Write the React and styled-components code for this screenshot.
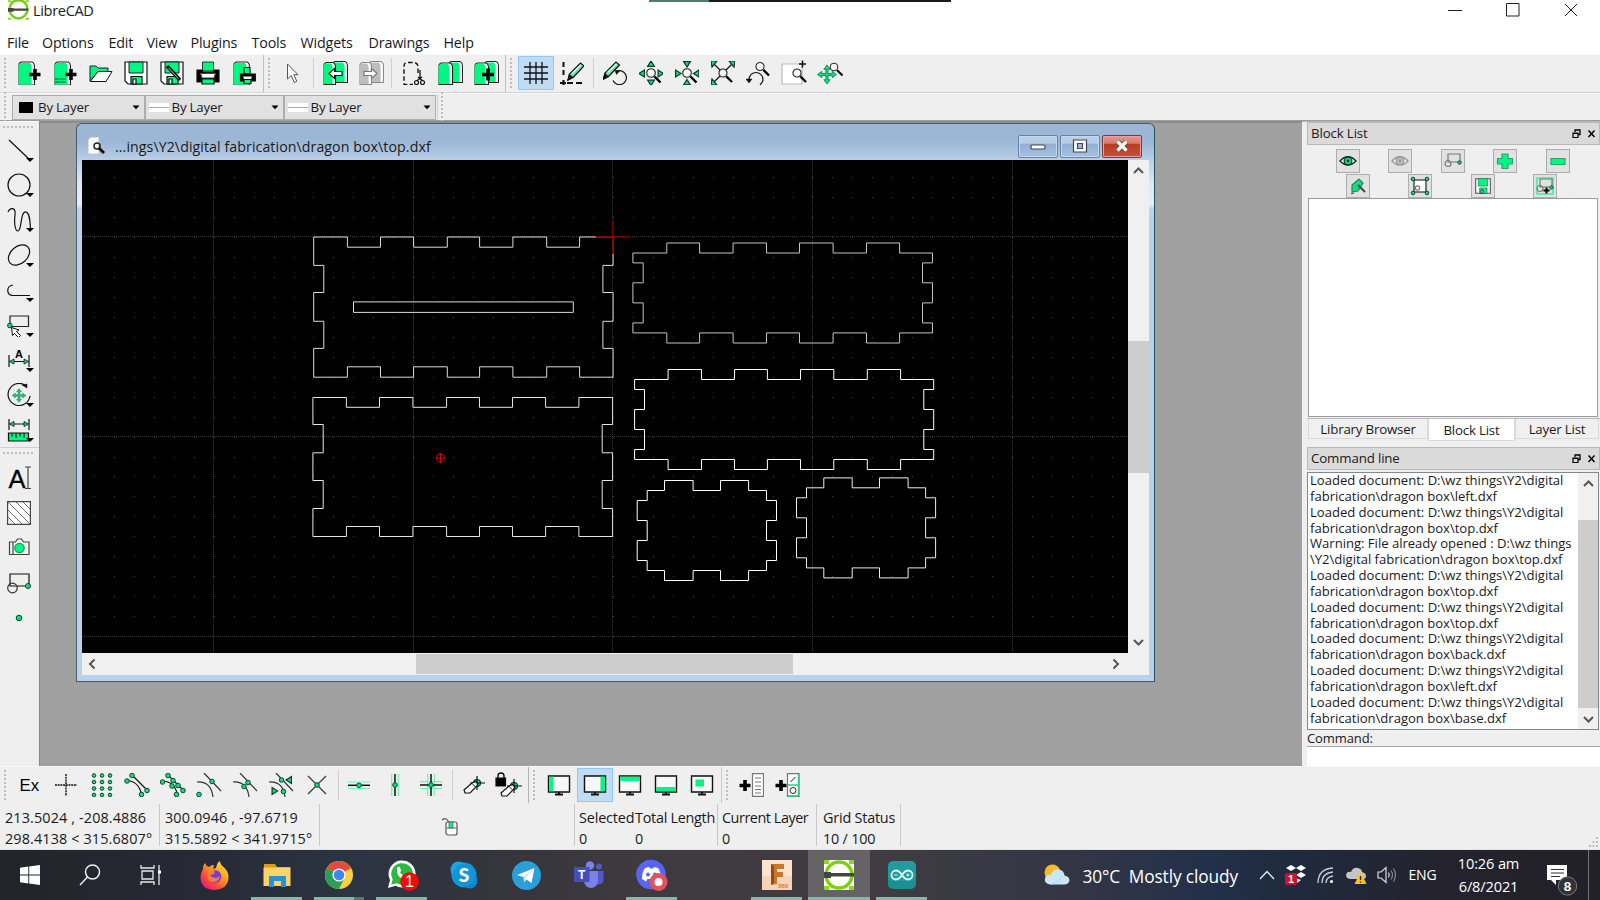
import React from "react";
import styled, { createGlobalStyle, css } from "styled-components";

const G = "#00f781";
const N = "#12dc80";
const FONT = `"Open Sans", "Noto Sans", "Liberation Sans", sans-serif`;

const Global = createGlobalStyle`
  * { box-sizing: border-box; }
  html, body { margin: 0; padding: 0; width: 1600px; height: 900px; overflow: hidden; }
  body { font-family: ${FONT}; color: #1a1a1a; background: #efefef; }
  svg { display: block; flex: none; }
`;

const Screen = styled.div`
  width: 1600px; height: 900px; display: flex; flex-direction: column; overflow: hidden;
`;
const TitleBar = styled.header`
  height: 27px; background: #fff; display: flex; align-items: flex-start; padding-left: 8px; position: relative;
`;
const AppName = styled.span`
  font-size: 14.6px; line-height: 21px; margin-left: 4px; letter-spacing: -0.35px; flex: 1; color: #222;
`;
const TopStrip = styled.div`
  position: absolute; left: 649px; top: 0; width: 302px; height: 2px;
  background: linear-gradient(90deg, #55796f 60px, #1a1a1a 60px);
`;
const CaptionButtons = styled.div`
  display: flex; height: 20px; width: 174px; justify-content: space-around; align-items: center;
`;
const MenuBar = styled.nav`
  height: 27px; background: #fff; display: flex; align-items: center; padding-left: 7px;
`;
const MenuItem = styled.span`
  width: ${(p) => p.$w}px; font-size: 14.3px; line-height: 30px; letter-spacing: -0.17px; white-space: nowrap; padding-top: 4px;
`;
const ToolRow = styled.div`
  height: ${(p) => p.$h}px; display: flex; align-items: center; background: #efefef; padding-bottom: ${(p) => p.$pb || 0}px;
  border-top: 1px solid #f8f8f8; border-bottom: 1px solid ${(p) => p.$line || "#d6d6d6"};
`;
const Grip = styled.i`
  width: 2px; height: 31px; margin: 0 ${(p) => p.$r ?? 6}px 0 4px; flex: none;
  background: repeating-linear-gradient(180deg, #bdbdbd 0 2px, transparent 2px 4px);
`;
const HGrip = styled.i`
  height: 2px; width: 32px; margin: 4px 0 ${(p) => p.$b}px 3px; flex: none;
  background: repeating-linear-gradient(90deg, #bdbdbd 0 2px, transparent 2px 4px);
`;
const ToolButton = styled.span`
  width: 35.85px; height: 34px; flex: none; display: flex; align-items: center; justify-content: center;
  ${(p) => p.$on && css`background: #c0dcf3; border: 1px solid #90c8f6;`}
`;
const Sep = styled.i`
  width: 1px; height: ${(p) => p.$h || 30}px; background: ${(p) => p.$c || "#d0d0d0"}; flex: none; margin: 0 ${(p) => p.$m ?? 3}px 0 ${(p) => p.$l ?? 3}px;
`;
const Combo = styled.span`
  width: ${(p) => p.$w}px; height: 25px; border: 1px solid #adadad; background: #e1e1e1; display: flex; align-items: center;
  font-size: 13.3px; letter-spacing: -0.2px; padding: 0 4px 0 ${(p) => p.$pl}px; gap: ${(p) => p.$gap}px;
  & > span { flex: 1; white-space: nowrap; }
`;
const Swatch = styled.i`
  width: 14px; height: 11px; background: #000;
`;
const LineSwatch = styled.i`
  width: 20px; height: 9px; background: linear-gradient(180deg, #fff 4px, #a8a8a8 4px, #a8a8a8 5px, #fff 5px);
`;
const Middle = styled.main`
  height: 645px; display: flex;
`;
const SideBar = styled.aside`
  width: 39px; background: #efefef; display: flex; flex-direction: column; border-top: 1px solid #f8f8f8;
`;
const SideButton = styled.span`
  height: 35px; width: 38px; display: flex; align-items: center; justify-content: center; position: relative; flex: none;
`;
const DropMark = styled.i`
  position: absolute; left: 26px; top: 26px; border: 4px solid transparent; border-top-color: #000; border-bottom: 0;
`;
const SideLine = styled.i`
  height: 1px; background: #cfcfcf; flex: none;
`;
const Mdi = styled.section`
  width: 1263px; background: #a0a0a0; border-top: 2px solid #8d8d8d; border-left: 1px solid #8a8a8a; padding: 0 0 0 36px;
`;
const SubWindow = styled.div`
  width: 1079px; height: 559px; border: 1px solid #4c5b6b; border-right-color: #1f5660; border-radius: 6px 6px 0 0;
  background: linear-gradient(180deg, #9cb7d6 0, #9cb7d6 18px, #bad0ea 37px, #dce8f5 60px, #e6eff8 80px, #b9d1ea 86px);
  display: flex; flex-direction: column; padding: 0 5px;
`;
const SubTitle = styled.div`
  height: 36px; display: flex; align-items: center; padding: 8px 7px 0 6px; font-size: 14.2px; white-space: pre;
  & > span { flex: 1; margin-left: 10px; letter-spacing: 0.07px; }
`;
const SubButton = styled.i`
  width: 40px; height: 23px; margin-left: 2px; border: 1px solid ${(p) => (p.$red ? "#7a3b38" : "#6582a5")}; border-radius: 2px;
  box-shadow: inset 0 0 0 1px ${(p) => (p.$red ? "#e9a199" : "#c4d8ee")};
  background: ${(p) => p.$red ? "linear-gradient(180deg,#e39a90 0,#d6796c 35%,#bb3a24 38%,#c4523c 100%)" : "linear-gradient(180deg,#b9d0ea 0,#b4cbe6 35%,#8fafd2 38%,#a8c2e0 100%)"};
  display: flex; align-items: center; justify-content: center;
`;
const CanvasRow = styled.div`
  display: flex; height: 493px;
`;
const VScroll = styled.div`
  width: ${(p) => p.$w}px; background: #f0f0f0; display: flex; flex-direction: column; align-items: center;
`;
const HScroll = styled.div`
  height: 22px; background: #f0f0f0; display: flex; align-items: center;
`;
const VThumb = styled.i`
  width: 100%; height: ${(p) => p.$s}px; margin: ${(p) => p.$a}px 0 ${(p) => p.$b}px; background: #cdcdcd; flex: none;
`;
const HThumb = styled.i`
  height: 20px; width: 377px; margin: 0 312px 0 313px; background: #cdcdcd; flex: none;
`;
const Dock = styled.aside`
  width: 298px; padding: 0 0 0 5px; background: #efefef; border-top: 1px solid #b8b8b8; display: flex; flex-direction: column;
`;
const DockTitle = styled.div`
  height: 23px; margin-top: ${(p) => p.$mt || 0}px; border: 1px solid #b9b9b9; background: #dadada; font-size: 13.3px; letter-spacing: -0.15px; line-height: 21px;
  display: flex; align-items: center; padding: 0 1px 0 3px; flex: none;
  & > span { flex: 1; }
`;
const BlockButtons = styled.div`
  display: flex; height: 24px; gap: ${(p) => p.$gap}px; padding-left: ${(p) => p.$pl}px; margin-top: ${(p) => p.$mt}px; flex: none;
`;
const BlockButton = styled.span`
  width: 24px; height: 24px; border: 1px solid #adadad; background: #e1e1e1; display: flex; align-items: center; justify-content: center; flex: none;
`;
const BlockView = styled.div`
  height: 219px; margin: 0 2px 0 1px; border: 1px solid #999ca3; background: #fff; flex: none;
`;
const Tabs = styled.div`
  display: flex; height: 25px; margin-top: 1px; padding-left: 1px; border-top: 1px solid #b9b9b9; flex: none;
`;
const Tab = styled.span`
  width: ${(p) => p.$w}px; height: ${(p) => (p.$on ? 22 : 20)}px; background: ${(p) => (p.$on ? "#fff" : "#f0f0f0")};
  border: 1px solid #d9d9d9; border-top: 0; text-align: center; font-size: 13.3px; line-height: ${(p) => (p.$on ? 22 : 21)}px;
  letter-spacing: -0.2px; white-space: nowrap; flex: none;
`;
const LogBox = styled.div`
  height: 258px; margin-top: 2px; border: 1px solid #828790; background: #fff; display: flex; flex: none; margin-right: 1px;
`;
const LogText = styled.pre`
  margin: 0; flex: 1; font-family: ${FONT}; font-size: 13.1px; line-height: 15.84px; padding: 0 0 0 2px; letter-spacing: -0.02px; overflow: hidden;
`;
const CommandLabel = styled.div`
  height: 16px; font-size: 13px; line-height: 16px; letter-spacing: -0.1px; flex: none;
`;
const CommandInput = styled.div`
  height: 20px; background: #fff; border-top: 1px solid #a8a8a8; flex: none;
`;
const Status = styled.footer`
  height: 46px; background: #efefef; display: flex; position: relative; border-bottom: 1px solid #e4e4e4;
`;
const Cell = styled.div`
  width: ${(p) => p.$w}px; padding-left: ${(p) => p.$pl || 5}px; font-size: 14.4px; line-height: 21px; padding-top: 3px; white-space: pre;
  border-right: ${(p) => (p.$line ? "1px solid #c8c8c8" : "0")}; letter-spacing: ${(p) => p.$ls || 0}px; flex: none; height: 42px;
`;
const MouseCell = styled.div`
  width: 255px; height: 42px; border-right: 1px solid #c8c8c8; display: flex; align-items: center; padding: 4px 0 0 121px;
`;
const Resize = styled.i`
  position: absolute; right: 1px; bottom: 2px;
`;
const Taskbar = styled.div`
  height: 50px; display: flex; color: #fff;
  background: linear-gradient(90deg, #23232a 0, #262a35 200px, #2c3443 360px, #34343c 480px, #3e3a3f 640px, #403c41 880px, #363844 1000px, #353644 1060px, #22304a 1210px, #1f2b3e 1280px, #24222c 1450px, #222028 1600px);
`;
const TaskItem = styled.span`
  width: ${(p) => p.$w || 62.5}px; height: 50px; display: flex; align-items: center; justify-content: center; position: relative; flex: none;
  padding-left: ${(p) => p.$nudge || 0}px;
  background: ${(p) => (p.$active ? "rgba(255,255,255,.2)" : "none")};
  &::after { content: ""; position: absolute; bottom: 0; height: 3px; left: ${(p) => (p.$active ? 0 : 6)}px; right: ${(p) => (p.$active ? 0 : 6)}px;
    background: ${(p) => (p.$two ? "linear-gradient(90deg,#83b8aa 40px,#56786f 40px)" : p.$open ? "#83b8aa" : "none")}; }
`;
const Weather = styled.div`
  display: flex; align-items: center; margin-left: 111px; width: 215px; font-size: 17.3px; letter-spacing: -0.12px; white-space: pre; padding-top: 3px; flex: none;
  & > span { margin-left: 13px; }
  & > svg { margin-bottom: 3px; }
`;
const Tray = styled.div`
  display: flex; align-items: center; flex: none; width: 150px; gap: 10px; padding-bottom: 1px;
`;
const Lang = styled.div`
  width: 46px; font-size: 14px; line-height: 50px; letter-spacing: -0.2px; flex: none;
`;
const Clock = styled.div`
  width: 70px; text-align: center; font-size: 14.6px; line-height: 23px; padding-top: 2px; margin-left: -1px; letter-spacing: -0.15px; flex: none; white-space: nowrap;
`;
const Notice = styled.div`
  margin-left: 22px; padding-top: 14px; flex: none;
`;
const PeekLine = styled.i`
  width: 1px; background: #74747a; margin-left: 10px;
`;

const Svg = ({ w = 24, h, vb, children }) => (
  <svg width={w} height={h || w} viewBox={vb || `0 0 ${w} ${h || w}`} fill="none" stroke="#111" strokeWidth="1.2">{children}</svg>
);
const Dot = ({ x, y, r = 2.3 }) => <circle cx={x} cy={y} r={r} fill={N} stroke="#0b4a2d" strokeWidth="1" />;
const Plus = ({ x, y, r = 5.5 }) => <path d={`M${x - r} ${y}h${2 * r}M${x} ${y - r}v${2 * r}`} stroke="#000" strokeWidth="3.6" />;
const Page = ({ x = 1, y = 1, w = 16, h = 23, c = G, s = "#222" }) => (
  <g stroke={s} strokeWidth="1.1">
    <path d={`M${x + 3} ${y}h${w - 5}q2.500 1 2.500 5v${h - 5}h-${w - 0.5}V${y + 3}q0-3 3-3z`} fill="#fff" />
    <path d={`M${x + 0.6} ${y + h - 0.6}V${y + 4}q0-3 3-3h${w - 8}q2 1 2 4v${h - 5.6}z`} fill={c} stroke="none" />
  </g>
);
const Pencil = ({ t }) => (
  <g transform={t}><path d="M0 17l1.500-6L12.500 0l3.500 3L6 13.500z" fill="#6fe0ae" stroke="#111" /><path d="M0 17l1.300-5 3.600 2.600z" fill="#111" /><path d="M4 10.500L13 1.800" stroke="#d9fff0" /></g>
);
const Lens = ({ x, y, s = 1 }) => (
  <g transform={`translate(${x} ${y}) scale(${s})`}><circle r="4.3" fill="#f6f6f6" stroke="#222" strokeWidth="1.1" /><path d="M3.5 3.5l6 6" stroke="#000" strokeWidth="2.4" /></g>
);
const MoveCross = ({ x, y, s = 1 }) => (
  <path transform={`translate(${x} ${y}) scale(${s})`} d="M0-9l3 4H1v4h4v-2l4 3-4 3V1H1v4h2L0 9l-3-4h2V1h-4v2l-4-3 4-3v2h4v-4h-2z" fill={N} stroke="#0a7a48" strokeWidth=".8" />
);
const Arrow = ({ x, y, a = 0 }) => <path transform={`translate(${x} ${y}) rotate(${a})`} d="M0-3l3.4 5.4h-6.8z" fill={N} stroke="#0b3a24" />;
const Floppy = () => (
  <><path d="M1 1h22v22H4l-3-3z" fill="#fff" /><path d="M5 1h14v11H5z" fill={G} strokeWidth=".9" /><path d="M7 15.500h11V23H7z" fill={G} /><path d="M9 18h3v5H9z" fill="#fff" /></>
);

const I = {
  newDoc: <Svg><Page /><Plus x={18} y={13.5} /></Svg>,
  newTpl: <Svg><Page /><path d="M2 18h11M2 21h11" stroke="#0a5c35" /><Plus x={18} y={13.5} /></Svg>,
  open: <Svg><path d="M1 5v15l8-9.500h10V7H9L7 5z" fill={G} stroke="#123" strokeWidth="1" /><path d="M1.300 20.500L9 10.500h14L17 20.500z" fill="#fff" strokeWidth="1" /></Svg>,
  save: <Svg><Floppy /></Svg>,
  saveAs: <Svg><Floppy /><path d="M7 5l13 14" stroke="#111" strokeWidth="3.600" /><path d="M8.500 7l10 10.500" stroke="#bbb" strokeWidth="1" /></Svg>,
  print: <Svg><path d="M6.500 1h11v9h-11z" fill={G} strokeWidth=".8" /><path d="M1 9h5l1 2h10l1-2h5v12h-5v-3H6v3H1z" fill="#000" /><path d="M6 17h12l1.500-4.500h-15z" fill="#fff" stroke="#444" /><path d="M6 18h12v5H6z" fill={G} /></Svg>,
  preview: <Svg><Page /><path d="M12 6.500h6v6h-6z" fill={G} /><path d="M8.500 13h15v7h-15z" fill="#000" /><path d="M11 15.500h9l-1 2.500h-7z" fill="#fff" stroke="none" /><path d="M12 18.500h7v4h-7z" fill={G} /></Svg>,
  pointer: <Svg><path d="M7.500 3v15l3.700-3.500 3.200 7 2.400-1.200-3-6.600H18z" fill="#fff" stroke="#555" strokeWidth="1" /></Svg>,
  undo: <Svg w={26} h={24}><Page x={10} y={0.5} w={15} h={21} /><Page x={1} y={1.500} w={12} h={22} /><path d="M7 12.500l5.500-5v3h7.500v4h-7.500v3z" fill="#fff" strokeWidth="1.100" /></Svg>,
  redo: <Svg w={26} h={24}><Page x={10} y={0.5} w={15} h={21} c="#bdbdbd" s="#888" /><Page x={1} y={1.500} w={12} h={22} c="#bdbdbd" s="#888" /><path d="M19 12.500l-5.500-5v3H6v4h7.500v3z" fill="#fff" stroke="#777" /></Svg>,
  cut: <Svg><path d="M16 12V6q0-4-4-4.500H5Q2 1.500 2 5v18.500h9" strokeDasharray="4.500 2.500" strokeWidth="1.400" /><path d="M18 9v9M14.500 20l5.500-4M21 20l-5-4" strokeWidth="1.300" /><circle cx="14.500" cy="21.500" r="2" /><circle cx="20.500" cy="21.500" r="2" /></Svg>,
  copy: <Svg w={26} h={24}><Page x={11} y={0.5} w={14} h={21} /><Page x={1} y={2} w={14} h={21.500} /></Svg>,
  paste: <Svg w={26} h={24}><Page x={11} y={0.5} w={14} h={21} /><Page x={1} y={2} w={14} h={21.500} /><Plus x={15} y={13.500} r={6} /></Svg>,
  grid: <Svg><path d="M6 1v22M12 1v22M18 1v22M0 6h24M0 12h24M0 18h24" stroke="#111" strokeWidth="1.300" /></Svg>,
  draft: <Svg><path d="M3.500 1v14" strokeDasharray="5 3" strokeWidth="2" /><path d="M7 22h17" strokeDasharray="6 3" strokeWidth="2" /><path d="M0 22h6M3.500 19v5" strokeWidth="2.200" /><Pencil t="translate(8 2)" /></Svg>,
  redraw: <Svg><path d="M13 10.500A7 7 0 1 1 10 19.500" strokeWidth="1.200" /><path d="M12 9.500h5l-3.500 4z" fill="#111" strokeWidth=".5" /><Pencil t="translate(0.5 1)" /></Svg>,
  zoomIn: <Svg><Arrow x={12} y={3} /><Arrow x={12} y={21.500} a={180} /><Arrow x={3} y={12.500} a={-90} /><Arrow x={21.500} y={12.500} a={90} /><Lens x={12} y={12} /></Svg>,
  zoomOut: <Svg><Arrow x={12} y={3} a={180} /><Arrow x={12} y={21.500} /><Arrow x={3} y={12.500} a={90} /><Arrow x={21.500} y={12.500} a={-90} /><Lens x={12} y={12} /></Svg>,
  zoomAuto: <Svg><path d="M3 3l9 9M21 3L3 21" /><path d="M0 0h6L1 6zM24 0h-6l5 6zM0 24h6l-5-6z" fill={N} stroke="#0b3a24" /><Lens x={12} y={12} s={0.950} /></Svg>,
  zoomPrev: <Svg><path d="M3 19c0-10 14-10 14 0 0 2-1 3-3 5" /><path d="M0 18h6l-3 4z" fill="#111" strokeWidth=".5" /><Lens x={14} y={5.500} s={0.950} /></Svg>,
  zoomWin: <Svg w={26} h={26}><path d="M1 4h20v20H1z" fill="#fff" stroke="#bbb" /><path d="M18 4h7M21.500 0.500v7" strokeWidth="1.500" /><Lens x={16} y={13} s={0.950} /></Svg>,
  zoomPan: <Svg w={26} h={24}><MoveCross x={10} y={13.500} s={1.050} /><Lens x={17} y={6} s={0.900} /></Svg>,
};

const S = {
  line: <Svg><path d="M2 2l20 19" /></Svg>,
  circle: <Svg><circle cx="12" cy="12" r="11" /></Svg>,
  curve: <Svg><path d="M1 4C3-1 9-1 8 7s0 16 3 16c4 0 2-20 8-19 4 1 4 10 4.500 17" /></Svg>,
  ellipse: <Svg><ellipse cx="12" cy="12" rx="12" ry="8.500" transform="rotate(-42 12 12)" /></Svg>,
  poly: <Svg><path d="M6 7C-1 8-1 17 6 17.500h17" /></Svg>,
  select: <Svg><path d="M3 3h18.500v10.500H3z" stroke="#222" /><Dot x={2.800} y={12.500} r={2.300} /><path d="M4.500 14.500l1 8 2-2 4 4 2-2-4-4 2.500-1.500z" fill="#fff" strokeWidth="1" /></Svg>,
  dim: <Svg><path d="M2 7v12M22 7v12M3 13.500h18" /><path d="M2.500 13.500l4.500-2.500v5zM21.500 13.500L17 11v5z" fill={N} strokeWidth=".8" /><text x="12" y="10" textAnchor="middle" fontSize="11" fontWeight="700" fontFamily="Liberation Sans" fill="#000" stroke="none">A</text></Svg>,
  modify: <Svg><path d="M18.500 2.500A11 11 0 1 0 23 13" /><path d="M15 2l5-1v4z" fill="#111" strokeWidth=".5" /><MoveCross x={12} y={12.500} s={0.750} /></Svg>,
  measure: <Svg w={24} h={26}><path d="M2 2v11M22 2v11M3 7h18" /><path d="M2.500 7L7 4.500v5zM21.500 7L17 4.500v5z" fill={N} strokeWidth=".8" /><path d="M1.500 16h20v8h-20z" fill={G} /><path d="M5 16v3.500M9 16v5M13 16v3.500M17 16v5" /></Svg>,
  text: <Svg w={28} h={28}><text x="3.500" y="24" fontSize="25" fontFamily="Liberation Sans" fill="#000" stroke="#000" strokeWidth=".3" textLength="17" lengthAdjust="spacingAndGlyphs">A</text><path d="M20 3h6M23 3v21.500M20 24.500h6" stroke="#444" /></Svg>,
  hatch: <Svg><path d="M.6.6h22.800v22.800H.6z" fill="#fff" stroke="#444" /><path d="M1 16l7 7M1 9l14 14M1 1l22 22M9 1l14 14M16 1l7 7" strokeWidth=".7" stroke="#333" /></Svg>,
  camera: <Svg><path d="M2.500 6h6l2-3h4l2 3h5.500v12.500H2.500zM6 6v12.500" stroke="#444" fill="#f4f4f4" /><circle cx="12.500" cy="12" r="4.700" fill={G} stroke="#189a5c" /></Svg>,
  block: <Svg><path d="M3 3h19v12H3z" stroke="#111" /><circle cx="5.500" cy="17" r="4.800" stroke="#333" /><Dot x={21} y={15} r={2.500} /></Svg>,
  point: <Svg><Dot x={12} y={12} r={2.800} /></Svg>,
};

const Monitor = ({ x, y, w, h }) => (
  <Svg><path d="M1.500 3h21v16h-21z" fill="#f7f7f7" strokeWidth="1.400" /><path d={`M${x} ${y}h${w}v${h}h-${w}z`} fill={G} stroke="none" /><path d="M8 21.500h8M12 19v3" strokeWidth="2" /></Svg>
);
const SnapTag = ({ t }) => (
  <g transform={t}><circle cx="14" cy="8" r="3.500" fill={N} stroke="#0a3a22" /><path d="M14 1v14M7 8h15" /><path d="M1 15l8-7 4 4-6 6H2z" fill="#fff" /><path d="M9 8l3.500-1.500L15 9l-2 3" fill="#eee" /></g>
);
const B = {
  ex: <Svg w={26} h={24}><text x="2.500" y="18" fontFamily="Liberation Sans" fontSize="17" fill="#000" stroke="none" textLength="19.500" lengthAdjust="spacingAndGlyphs">Ex</text></Svg>,
  free: <Svg><path d="M1 12h22M12 1v22" strokeDasharray="2 .7" strokeWidth="1.400" /></Svg>,
  grid: <Svg>{[4, 12, 20].map((x) => [2.500, 9, 15.500, 22].map((y) => <Dot key={x + "-" + y} x={x} y={y} r={1.800} />))}</Svg>,
  ends: <Svg w={26} h={24}><path d="M8 2l15 15M3 7.500q12 1 14.500 14" /><Dot x={8} y={2.500} /><Dot x={3} y={8} /><Dot x={23} y={17.500} /><Dot x={17.500} y={21.500} /></Svg>,
  entity: <Svg w={26} h={24}><path d="M8 2l15 15M3 8q12 1 14.500 14" />{[[8, 2.500], [13, 7.500], [18, 12.500], [23, 17.500], [2.500, 9], [12, 13], [16.500, 21.500]].map((p) => <Dot key={p} x={p[0]} y={p[1]} />)}</Svg>,
  center: <Svg w={26} h={24}><path d="M8 0l17 18M1 9q14-1 16 15" stroke="#333" /><Dot x={16} y={8.500} /><Dot x={3} y={21.500} /></Svg>,
  middle: <Svg w={26} h={24}><path d="M8 0l17 18M1 9q14-1 16 15" stroke="#333" /><Dot x={16} y={9.500} /><Dot x={12} y={13.500} /></Svg>,
  dist: <Svg w={26} h={24}><path d="M8 0l17 18M1 9q14-1 16 15" stroke="#333" /><Dot x={13.500} y={7} /><Dot x={15.500} y={18.500} /><Arrow x={21} y={7} a={-90} /><Arrow x={6.500} y={18} a={90} /></Svg>,
  inter: <Svg><path d="M3 3l18 18M21 3L3 21" stroke="#444" strokeWidth="1.400" /><Dot x={12} y={12} /></Svg>,
  horiz: <Svg><path d="M1 9h22M1 15.500h22" stroke="#6df5b5" /><path d="M1 12.300h22" strokeWidth="1.500" /><Dot x={12} y={12.300} /></Svg>,
  vert: <Svg><path d="M8.700 1v22M15.300 1v22" stroke="#6df5b5" /><path d="M12 1v22" strokeWidth="1.500" /><Dot x={12} y={12} /></Svg>,
  ortho: <Svg><path d="M8.700 1v22M15.300 1v22M1 8.700h22M1 15.500h22" stroke="#6df5b5" /><path d="M12 1v22M1 12h22" strokeWidth="1.500" /><Dot x={12} y={12} /></Svg>,
  rel: <Svg><SnapTag t="translate(1 2)" /></Svg>,
  lock: <Svg w={28} h={26}><SnapTag t="translate(5 6)" /><path d="M1 6h9.500v8H1z" fill="#000" /><path d="M3 6V4q0-3 3-3t3 3v2" strokeWidth="1.400" /></Svg>,
  m1: <Monitor x={2.200} y={3.700} w={4.300} h={14.600} />,
  m2: <Monitor x={17.500} y={3.700} w={4.300} h={14.600} />,
  m3: <Monitor x={2.200} y={3.700} w={19.600} h={4.300} />,
  m4: <Monitor x={2.200} y={14} w={19.600} h={4.300} />,
  m5: <Monitor x={5.500} y={6.500} w={8.500} h={7} />,
  addMenu: <Svg w={26} h={24}><Plus x={7} y={12.500} /><path d="M14.500 .6h11v22.800h-11z" fill="#fff" stroke="#777" /><path d="M17 5h6M17 9h6M17 13h6M17 16.500h6M17 20h6" stroke="#777" /></Svg>,
  addTool: <Svg w={26} h={24}><Plus x={7} y={12.500} /><path d="M13.500 .6h11.500v22.800H13.500z" fill="#fff" stroke="#777" /><path d="M24.500 1v22M14 12h11M14 23h10" stroke="#27cf85" strokeWidth="1.400" /><path d="M16.500 9l5-5" strokeWidth="1" /><circle cx="19" cy="17.500" r="3" strokeWidth=".9" /></Svg>,
};

const Down = () => <svg width="8" height="5" viewBox="0 0 8 5"><path d="M.5 .5h7L4 4.200z" fill="#000" /></svg>;
const Chevron = ({ d }) => (
  <svg width="21" height="22" viewBox="0 0 21 22" fill="none" stroke="#555" strokeWidth="2">
    <path transform={`rotate(${{ up: 0, right: 90, down: 180, left: 270 }[d]} 10.5 11)`} d="M6 13l4.500-4.500L15 13" />
  </svg>
);
const DockIcons = () => (
  <svg width="26" height="10" viewBox="0 0 26 10" fill="none" stroke="#000">
    <path d="M3 3V1h5v4.500H6M3 1h5" strokeWidth="1.300" /><path d="M1 4h5v4.500H1zM1 4.300h5" strokeWidth="1.200" /><path d="M16.500 1.500l6 6.500M22.500 1.500l-6 6.500" strokeWidth="1.500" />
  </svg>
);
const Logo = ({ s }) => (
  <svg width={s} height={s} viewBox="0 0 30 30">
    <path d="M0 0h30v30H0z" fill="#fff" /><path d="M0 0h5v4H0zM25 0h5v4h-5zM0 26h5v4H0zM25 26h5v4h-5z" fill="#8fd820" />
    <circle cx="15" cy="15" r="13" fill="none" stroke="#7fd012" strokeWidth="3.500" />
    <path d="M0 12h7v1h23v3.500H7V18H0z" fill="#444" />
  </svg>
);

const Eye = ({ c, k }) => (
  <Svg w={18}><path d="M1 9q8-8.500 16 0-8 8-16 0z" fill="#eee" stroke={k} strokeWidth="1.500" /><circle cx="9" cy="9" r="3.800" fill={c} stroke={k} /><circle cx="9" cy="9" r="1.400" fill={k} stroke="none" /></Svg>
);
const MiniBlock = () => <><path d="M4 2h12v8H4z" stroke="#777" /><circle cx="4" cy="11.500" r="3" stroke="#777" /><Dot x={15.500} y={10.500} r={1.700} /></>;
const MiniIcons1 = [
  <Eye c={N} k="#07341f" />,
  <Eye c="#bbb" k="#999" />,
  <Svg w={18}><MiniBlock /></Svg>,
  <Svg w={18}><path d="M6 2h6v4.500h4.500v5.500H12v4.500H6V12H1.500V6.500H6z" fill={G} stroke="#2ba56d" /></Svg>,
  <Svg w={18}><path d="M2 6.500h14v6H2z" fill={G} stroke="#2ba56d" /></Svg>,
];
const MiniIcons2 = [
  <Svg w={18}><path d="M3 8l7-6 4 4-5 8-6 1z" fill={N} stroke="#198e59" /><path d="M9 8l7 7" stroke="#444" strokeWidth="2" /><path d="M2 17l3-1" stroke="#555" /></Svg>,
  <Svg w={20}><path d="M4 4h12v12H4z" fill="#fff" stroke="#555" strokeWidth="1.600" /><circle cx="7.500" cy="12" r="2.200" stroke="#777" /><Dot x={3} y={3} r={1.800} /><Dot x={17} y={3} r={1.800} /><Dot x={3} y={17} r={1.800} /><Dot x={17} y={17} r={1.800} /></Svg>,
  <Svg w={16} vb="0 0 24 24"><path d="M1 1h22v22H1z" fill="#fff" stroke="#555" strokeWidth="1.600" /><path d="M5 1h14v11H5zM7 15h11v8H7z" fill={G} stroke="#285" /><path d="M9 18h3v5H9z" fill="#fff" /></Svg>,
  <Svg w={18}><path d="M1 1h16v16H1z" stroke="#42eba0" strokeWidth="1.500" /><MiniBlock /><path d="M7.500 13.500h6M10.500 10.500v6" stroke="#000" strokeWidth="2" /></Svg>,
];

/* Drawing geometry, in canvas pixels */
const XG = [413.3, 612.8, 812.2, 1012, 213.5];
const YG = [236.8, 436.5, 636.2];
const dotsX = Array.from({ length: 53 }, (_, i) => 93.9 + i * 19.96);
const dotsY = Array.from({ length: 24 }, (_, i) => 177 + i * 19.965);

const zig = (x0, y0, seq) => `M${x0} ${y0}` + seq.map((v, i) => (i % 2 ? "V" : "H") + v).join("") + "z";

const wide = (xs, outer, inner, sides, innerBottom, outerBottom, xl, xr) => {
  let d = `M${xs[0]} ${outer}`;
  for (let i = 1; i < xs.length - 1; i++) d += `H${xs[i]}V${i % 2 ? inner : outer}`;
  d += `H${xs[xs.length - 1]}`;
  sides.forEach((y, i) => { d += `V${y}H${i % 2 ? xs[xs.length - 1] : xr}`; });
  d += `V${outerBottom}`;
  for (let i = xs.length - 2; i > 0; i--) d += `H${xs[i]}V${i % 2 ? outerBottom : innerBottom}`;
  d += `H${xs[0]}`;
  [...sides].reverse().forEach((y, i) => { d += `V${y}H${i % 2 ? xs[0] : xl}`; });
  return d + "z";
};
const small = (x, y) => zig(x[1], y[1], [
  x[2], y[0], x[3], y[1], x[4], y[0], x[5], y[1], x[6], y[2], x[7], y[3], x[6], y[4], x[7], y[5], x[6], y[6],
  x[5], y[7], x[4], y[6], x[3], y[7], x[2], y[6], x[1], y[5], x[0], y[4], x[1], y[3], x[0], y[2], x[1],
]);
const parts = [
  ["#dcdcdc", wide([313.7, 347.4, 380.5, 413.6, 447.3, 479.6, 512.9, 546.7, 579.6, 613.1], 237, 247.2, [265.4, 292.5, 321.3, 348.4], 366.8, 377.2, 323.8, 602.9)],
  ["#dcdcdc", "M353.5 301.900h219.800v10.500h-219.800z"],
  ["#e6e6e6", wide([312.9, 346.4, 379.5, 412.9, 446.6, 479.5, 512.5, 545.6, 578.9, 612.6], 397.5, 407.3, [424.5, 452.8, 480.5, 508.5], 526.5, 536.5, 323.2, 602.2)],
  ["#c4c4c4", wide([632.9, 666.8, 699.6, 733.1, 766.5, 799.5, 833.1, 866.5, 899.6, 932.5], 253, 243, [262.9, 282.8, 302.9, 322.9], 343, 332.9, 643.2, 922.5)],
  ["#fff", wide([634.6, 668.1, 701.5, 734.5, 767.4, 800.5, 833.8, 867.3, 900.6, 933.7], 379.5, 369.5, [389.5, 409.5, 429.5, 449.5], 469.5, 459.5, 644.5, 923.8)],
  ["#fff", small([637.2, 647.2, 664.5, 693.1, 720.5, 748.6, 766.5, 776.5], [480.5, 490.5, 500.5, 520.5, 540.5, 560.5, 570.5, 580.5])],
  ["#eee", small([796.5, 806.5, 823.8, 852.2, 879.5, 908.1, 925.6, 935.6], [477.9, 487.8, 497.8, 517.8, 537.8, 557.8, 567.9, 577.9])],
];

const Drawing = () => (
  <svg width="1046" height="493" viewBox="82 160 1046 493" fill="none">
    <rect x="82" y="160" width="1046" height="493" fill="#000" />
    <g fill="#3f3f3f">
      {dotsX.map((x, i) => dotsY.map((y, j) => <rect key={i + "_" + j} x={Math.round(x)} y={Math.round(y)} width="1" height="1" />))}
    </g>
    <g stroke="#383838" strokeDasharray="1 1">
      {XG.map((x) => <path key={x} d={`M${Math.floor(x) + 0.5} 160v493`} />)}
      {YG.map((y) => <path key={y} d={`M82 ${Math.floor(y) + 0.5}h1046`} />)}
    </g>
    {parts.map(([c, d]) => <path key={d} d={d} stroke={c} />)}
    <path d="M596 236.800h34.500M612.900 220v34" stroke="#000" strokeWidth="1.500" />
    <path d="M596 236.800h34.500M612.900 220v34" stroke="#b00808" />
    <g stroke="#c40c0c"><circle cx="440.500" cy="458" r="4.200" /><path d="M436 458h9M440.500 453v10" /></g>
  </svg>
);

const LOG = `Loaded document: D:\\wz things\\Y2\\digital
fabrication\\dragon box\\left.dxf
Loaded document: D:\\wz things\\Y2\\digital
fabrication\\dragon box\\top.dxf
Warning: File already opened : D:\\wz things
\\Y2\\digital fabrication\\dragon box\\top.dxf
Loaded document: D:\\wz things\\Y2\\digital
fabrication\\dragon box\\top.dxf
Loaded document: D:\\wz things\\Y2\\digital
fabrication\\dragon box\\top.dxf
Loaded document: D:\\wz things\\Y2\\digital
fabrication\\dragon box\\back.dxf
Loaded document: D:\\wz things\\Y2\\digital
fabrication\\dragon box\\left.dxf
Loaded document: D:\\wz things\\Y2\\digital
fabrication\\dragon box\\base.dxf`;

const MENU = [["File", 35], ["Options", 66.5], ["Edit", 38], ["View", 44], ["Plugins", 61], ["Tools", 49], ["Widgets", 68], ["Drawings", 75], ["Help", 40]];

const T = {
  start: <svg width="20" height="20" viewBox="0 0 20 20" fill="#fff"><path d="M0 2.800l8.300-1.200v8H0zM9.200 1.500L20 0v9.600H9.200zM0 10.500h8.300v8L0 17.300zM9.200 10.500H20V20L9.200 18.600z" /></svg>,
  search: <svg width="22" height="22" viewBox="0 0 22 22" fill="none" stroke="#eee" strokeWidth="1.500"><circle cx="13.500" cy="8" r="7" /><path d="M8.500 13L1 21" /></svg>,
  view: <svg width="22" height="20" viewBox="0 0 22 20" fill="none" stroke="#e8e8e8" strokeWidth="1.300"><path d="M1 0v3h13V0M1 20v-3h13v3M2 6h11v8H2zM19 0v20" /><path d="M18 5.500h3v3h-3z" fill="#fff" stroke="none" /></svg>,
  firefox: <svg width="29" height="29" viewBox="0 0 29 29">
    <defs><linearGradient id="ff" x1="1" y1="0" x2=".2" y2="1"><stop offset="0" stopColor="#fff24a" /><stop offset=".4" stopColor="#ffa51f" /><stop offset=".7" stopColor="#ff4f3c" /><stop offset="1" stopColor="#e8177d" /></linearGradient></defs>
    <path d="M3 8q0-4 2-6 1 3 4 4 2-2 5-2l-1 4 3-1q1-5 3.500-7 1 4 5 7 4 4 4 9 0 12-14 13Q1 28.500.5 16.500.5 12 3 8z" fill="url(#ff)" />
    <circle cx="15" cy="15.500" r="6.300" fill="#7a3ccf" /><path d="M8 9q5-1 7 2-1 3-5 3 2 3 5 3 3 0 5-2-1 6-7 6-6-1-6-7z" fill="#ff8a2a" opacity=".85" />
  </svg>,
  folder: <svg width="28" height="23" viewBox="0 0 28 23"><path d="M1 0h11l2 3h13v5H1z" fill="#d99a1c" /><path d="M.5 3.500h27V22H.5z" fill="#fbd36b" /><path d="M6 23V12h17v11h-5v-6h-7v6z" fill="#2f8fd6" /></svg>,
  chrome: <svg width="28" height="28" viewBox="0 0 28 28"><circle cx="14" cy="14" r="14" fill="#fdd13e" /><path d="M14 14L1.900 7A14 14 0 0 1 26.100 7z" fill="#e14b3c" /><path d="M14 14L1.900 7A14 14 0 0 0 14 28l5-10z" fill="#2a9f55" /><circle cx="14" cy="14" r="6.600" fill="#fff" /><circle cx="14" cy="14" r="5.300" fill="#4285f4" /></svg>,
  whatsapp: <svg width="32" height="32" viewBox="0 0 32 32"><path d="M1 29l2-8a13.500 13.500 0 1 1 5.500 5.700z" fill="#fff" /><path d="M4.200 25.800l1.500-5.500a10.800 10.800 0 1 1 4 4z" fill="#2cb742" /><path d="M10 9q1-2 3-.5l1 3-1 2q2 3 5 4l2-1 2.500 2q0 3-4 3Q9 19 10 9z" fill="#fff" /><circle cx="22.500" cy="22.500" r="9.300" fill="#f50a0a" /><text x="22.500" y="28" textAnchor="middle" fontFamily="Liberation Sans" fontSize="16" fill="#fff">1</text></svg>,
  skype: <svg width="28" height="28" viewBox="0 0 28 28"><circle cx="14" cy="14" r="12.500" fill="#1496dc" /><circle cx="8.500" cy="8.500" r="8" fill="#1aa5e8" /><circle cx="19.500" cy="19.500" r="8" fill="#0c86d0" /><circle cx="14" cy="14" r="11" fill="#1395da" /><text x="14" y="20.500" textAnchor="middle" fontFamily="Lato" fontWeight="900" fontSize="19" fill="#fff">S</text></svg>,
  telegram: <svg width="29" height="29" viewBox="0 0 29 29"><circle cx="14.500" cy="14.500" r="14.500" fill="#2b9fd9" /><path d="M5 14l17.500-7-3 15-5-3.500-2.500 2.500-.5-5z" fill="#fff" /><path d="M11.500 16l8-6-6.500 7-.5 4z" fill="#b5d5ea" /></svg>,
  teams: <svg width="30" height="28" viewBox="0 0 30 28"><circle cx="16" cy="4.500" r="4.200" fill="#7b83eb" /><circle cx="25" cy="5.500" r="3" fill="#5059c9" /><path d="M20 10h9.500v9q0 4-4.500 4.500h-5z" fill="#5059c9" /><path d="M10 10h14v10q-1 7-7 7t-7-7z" fill="#7b83eb" /><path d="M0 6h15.500v15H0z" fill="#464fb8" /><text x="7.700" y="18" textAnchor="middle" fontFamily="Liberation Sans" fontWeight="700" fontSize="12" fill="#fff">T</text></svg>,
  discord: <svg width="32" height="32" viewBox="0 0 32 32"><circle cx="15" cy="15.500" r="14.800" fill="#5865f2" /><path d="M6 20q0-7 3-11l4-1 1 1.500h3L18 8l4 1q3 4 3 11l-4 2.500-1.500-2.500h-8L10 22.500z" fill="#fff" /><circle cx="12" cy="15.500" r="1.900" fill="#5865f2" /><circle cx="19" cy="15.500" r="1.900" fill="#5865f2" /><circle cx="22.500" cy="23" r="9" fill="#e4535a" /><circle cx="22.500" cy="23" r="4" fill="#fff" /></svg>,
  fusion: <svg width="30" height="30" viewBox="0 0 30 30"><path d="M0 0h30v30H0z" fill="#fbe3cf" /><path d="M0 16h30v14H0z" fill="#f3c9a3" opacity=".6" /><path d="M9 4h13v5h-7v3h6v5h-6v7l-6 1z" fill="#c8762a" /><path d="M9 4l3 2v17l-3 2z" fill="#8f4d18" /><text x="21" y="28" textAnchor="middle" fontFamily="Liberation Sans" fontSize="6" fontWeight="700" fill="#e07c2c">360</text></svg>,
  arduino: <svg width="28" height="28" viewBox="0 0 28 28"><rect width="28" height="28" rx="5" fill="#1c8f93" /><rect width="28" height="20" rx="5" fill="#27a3a5" opacity=".6" /><path d="M14 14q-3-4.500-6-4.500a4.500 4.500 0 0 0 0 9q3 0 6-4.500t6-4.500a4.500 4.500 0 0 1 0 9q-3 0-6-4.500z" fill="none" stroke="#e6fbfa" strokeWidth="1.800" /><path d="M6.300 14h3.200M18.300 14h3.200M19.900 12.400v3.200" stroke="#e6fbfa" /></svg>,
};

export default function App() {
  return (
    <Screen>
      <Global />
      <TitleBar>
        <TopStrip />
        <Svg w={21} h={20} vb="0 0 30 28"><path d="M0 0h5v3H0zM25 0h5v3h-5zM0 25h5v3H0zM25 25h5v3h-5z" fill="#8fd820" stroke="none" /><circle cx="15" cy="13" r="13" stroke="#7fc820" strokeWidth="3.500" /><path d="M0 11h8v1h21v3H8v1.500H0z" fill="#444" stroke="none" /></Svg>
        <AppName>LibreCAD</AppName>
        <CaptionButtons>
          <Svg w={14}><path d="M0 7.500h14" stroke="#222" strokeWidth="1" /></Svg>
          <Svg w={14}><path d="M.5.5h12.500V13H.5z" stroke="#222" strokeWidth="1" /></Svg>
          <Svg w={14}><path d="M1 1l12 12M13 1L1 13" stroke="#222" strokeWidth="1" /></Svg>
        </CaptionButtons>
      </TitleBar>
      <MenuBar>{MENU.map(([t, w]) => <MenuItem key={t} $w={w}>{t}</MenuItem>)}</MenuBar>
      <ToolRow $h={39} $pb={1}>
        <Grip $r={5} />
        {["newDoc", "newTpl", "open", "save", "saveAs", "print", "preview"].map((k) => <ToolButton key={k}>{I[k]}</ToolButton>)}
        <Sep $h={37} $l={1.500} $m={0} $c="#c0c0c0" /><Grip $r={4} />
        <ToolButton>{I.pointer}</ToolButton>
        <Sep $l={3} $m={2.500} />
        <ToolButton>{I.undo}</ToolButton><ToolButton>{I.redo}</ToolButton>
        <Sep $m={3.500} />
        {["cut", "copy", "paste"].map((k) => <ToolButton key={k}>{I[k]}</ToolButton>)}
        <Sep $h={37} $l={2} $m={0} $c="#c0c0c0" /><Grip $r={6} />
        <ToolButton $on>{I.grid}</ToolButton><ToolButton>{I.draft}</ToolButton>
        <Sep />
        {["redraw", "zoomIn", "zoomOut", "zoomAuto", "zoomPrev", "zoomWin", "zoomPan"].map((k) => <ToolButton key={k}>{I[k]}</ToolButton>)}
      </ToolRow>
      <ToolRow $h={28} $line="#9c9c9c">
        <Grip $r={6} />
        <Combo $w={133} $pl={6} $gap={5}><Swatch /><span>By Layer</span><Down /></Combo>
        <Combo $w={139} $pl={3} $gap={2.500}><LineSwatch /><span>By Layer</span><Down /></Combo>
        <Combo $w={152} $pl={3} $gap={2.500}><LineSwatch /><span>By Layer</span><Down /></Combo>
        <Sep $h={26} $l={1} $m={-1} /><Grip />
      </ToolRow>
      <Middle>
        <SideBar>
          <HGrip $b={4} />
          {["line", "circle", "curve", "ellipse", "poly", "select", "dim", "modify", "measure"].map((k) => <SideButton key={k}>{S[k]}<DropMark /></SideButton>)}
          <SideLine /><HGrip $b={6} />
          {["text", "hatch", "camera", "block", "point"].map((k) => <SideButton key={k}>{S[k]}</SideButton>)}
        </SideBar>
        <Mdi>
          <SubWindow>
            <SubTitle>
              <Svg w={17} h={18}><path d="M.5 3L3 .5h7.500v16H.5z" fill="#fff" stroke="#ddd" /><circle cx="9" cy="9" r="3" stroke="#222" strokeWidth="1.500" /><path d="M11 11l5 5" stroke="#000" strokeWidth="2.600" /></Svg>
              <span>{"...ings\\Y2\\digital fabrication\\dragon box\\top.dxf"}</span>
              <SubButton><Svg w={16}><rect x="1" y="7" width="14" height="4" rx="1" fill="#fff" stroke="#445" /></Svg></SubButton>
              <SubButton><Svg w={16}><path d="M1.500 2h13v12h-13z" fill="#fff" stroke="#445" /><path d="M5.500 5.500h5v5h-5z" fill="#9db8d8" stroke="#445" /></Svg></SubButton>
              <SubButton $red><Svg w={16}><path d="M3.500 3.500l9 9M12.500 3.500l-9 9" stroke="#554" strokeWidth="5" /><path d="M3.500 3.500l9 9M12.500 3.500l-9 9" stroke="#fff" strokeWidth="3.200" /></Svg></SubButton>
            </SubTitle>
            <CanvasRow>
              <Drawing />
              <VScroll $w={21}><Chevron d="up" /><VThumb $a={159} $s={132} $b={158} /><Chevron d="down" /></VScroll>
            </CanvasRow>
            <HScroll><Chevron d="left" /><HThumb /><Chevron d="right" /></HScroll>
          </SubWindow>
        </Mdi>
        <Dock>
          <DockTitle><span>Block List</span><DockIcons /></DockTitle>
          <BlockButtons $gap={28.5} $pl={28.5} $mt={4}>{MiniIcons1.map((m, i) => <BlockButton key={i}>{m}</BlockButton>)}</BlockButtons>
          <BlockButtons $gap={38.5} $pl={38.5} $mt={1}>{MiniIcons2.map((m, i) => <BlockButton key={i}>{m}</BlockButton>)}</BlockButtons>
          <BlockView />
          <Tabs><Tab $w={120}>Library Browser</Tab><Tab $w={87} $on>Block List</Tab><Tab $w={84}>Layer List</Tab></Tabs>
          <DockTitle $mt={4}><span>Command line</span><DockIcons /></DockTitle>
          <LogBox>
            <LogText>{LOG}</LogText>
            <VScroll $w={20}><Chevron d="up" /><VThumb $a={25} $s={188} $b={0} /><Chevron d="down" /></VScroll>
          </LogBox>
          <CommandLabel>Command:</CommandLabel>
          <CommandInput />
        </Dock>
      </Middle>
      <ToolRow $h={38} $line="#efefef">
        <Grip $r={6} />
        {["ex", "free", "grid", "ends", "entity", "center", "middle", "dist", "inter"].map((k) => <ToolButton key={k}>{B[k]}</ToolButton>)}
        <Sep $m={2.500} />
        {["horiz", "vert", "ortho"].map((k) => <ToolButton key={k}>{B[k]}</ToolButton>)}
        <Sep />
        <ToolButton>{B.rel}</ToolButton><ToolButton>{B.lock}</ToolButton>
        <Sep $h={36} $l={1} $m={0} $c="#b4b4b4" /><Grip $r={5.500} />
        {["m1", "m2", "m3", "m4", "m5"].map((k) => <ToolButton key={k} $on={k === "m2"}>{B[k]}</ToolButton>)}
        <Sep $h={36} $l={1} $m={0} $c="#c8c8c8" /><Grip $r={5} />
        <ToolButton>{B.addMenu}</ToolButton><ToolButton>{B.addTool}</ToolButton>
      </ToolRow>
      <Status>
        <Cell $w={160} $ls={0.13} $line>{"213.5024 , -208.4886\n298.4138 < 315.6807°"}</Cell>
        <Cell $w={160} $ls={0.13} $line>{"300.0946 , -97.6719\n315.5892 < 341.9715°"}</Cell>
        <MouseCell><Svg w={17} h={18}><path d="M1 2q4-3 6 1l1 2" stroke="#555" /><rect x="5" y="4" width="11" height="13" rx="2" fill="#fff" stroke="#555" /><path d="M8 4h4v6H8z" fill={G} stroke="#555" strokeWidth=".7" /><path d="M5 10h11" stroke="#777" /></Svg></MouseCell>
        <Cell $w={56} $pl={4} $ls={-0.15}>{"Selected\n0"}</Cell>
        <Cell $w={87} $pl={4} $ls={-0.27} $line>{"Total Length\n0"}</Cell>
        <Cell $w={99} $pl={4} $ls={-0.45} $line>{"Current Layer\n0"}</Cell>
        <Cell $w={84} $pl={6} $ls={-0.2} $line>{"Grid Status\n10 / 100"}</Cell>
        <Resize><svg width="10" height="10" fill="#bdbdbd"><path d="M7 0h2v2H7zM7 4h2v2H7zM7 8h2v2H7zM3.500 4h2v2h-2zM3.500 8h2v2h-2zM0 8h2v2H0z" /></svg></Resize>
      </Status>
      <Taskbar>
        <TaskItem $w={60}>{T.start}</TaskItem><TaskItem $w={60}>{T.search}</TaskItem><TaskItem $w={62.5}>{T.view}</TaskItem>
        <TaskItem $nudge={1}>{T.firefox}</TaskItem><TaskItem $open $nudge={1}>{T.folder}</TaskItem><TaskItem $open $two>{T.chrome}</TaskItem>
        <TaskItem $open $nudge={3}>{T.whatsapp}</TaskItem><TaskItem $nudge={1}>{T.skype}</TaskItem><TaskItem $nudge={1}>{T.telegram}</TaskItem>
        <TaskItem>{T.teams}</TaskItem><TaskItem $open $nudge={2}>{T.discord}</TaskItem><TaskItem />
        <TaskItem $open $nudge={1}>{T.fusion}</TaskItem><TaskItem $open $active><Logo s={30} /></TaskItem><TaskItem $open $nudge={1}>{T.arduino}</TaskItem>
        <Weather>
          <svg width="26" height="22" viewBox="0 0 26 22"><circle cx="8.500" cy="8.500" r="8" fill="#f7b928" /><path d="M6 20.500q-6-1-5-6 1-4 6-4 2-6 8-5 5 1 5.500 6 5 1 5 5-1 4-5 4z" fill="#c9e6fa" /><path d="M6 20.500q6 0 12-8" stroke="#9dcdf0" fill="none" opacity=".6" /></svg>
          <span>30°C  Mostly cloudy</span>
        </Weather>
        <Tray>
          <svg width="16" height="10" viewBox="0 0 16 10" fill="none" stroke="#eee" strokeWidth="1.300"><path d="M1 9l7-7.500L15 9" /></svg>
          <svg width="21" height="22" viewBox="0 0 21 22"><path d="M6 1l5 3-5 3-5-3zM16 1l5 3-5 3-5-3zM16 8l5 3-5 3-5-3zM11 14l5 2-4 3z" fill="#fff" /><rect x="0" y="9" width="12" height="12" rx="2" fill="#cc1030" /><text x="6" y="19" textAnchor="middle" fontFamily="Liberation Sans" fontWeight="700" fontSize="11" fill="#fff">1</text></svg>
          <svg width="20" height="20" viewBox="0 0 20 20" fill="none" stroke="#c9ced6" strokeWidth="1.300"><path d="M2 18Q2 4 17 3M6 18Q6 8 17 7M10 18q0-6 7-7" /><circle cx="15.500" cy="16.500" r="1.600" fill="#fff" stroke="none" /></svg>
          <svg width="21" height="20" viewBox="0 0 21 20"><path d="M5 14q-5 0-5-4 1-4 5-3 2-5 7-4 4 1 4 4 4 1 4 4 0 3-3 3z" fill="#c4c4c4" /><path d="M14.500 7l6 12h-12z" fill="#fdc21c" /><path d="M14.500 11v4M14.500 16.500v1.200" stroke="#222" strokeWidth="1.300" /></svg>
          <svg width="20" height="18" viewBox="0 0 20 18" fill="none" stroke="#ddd" strokeWidth="1.200"><path d="M1 6h3l5-4.500v15L4 12H1z" /><path d="M11.500 6.500q1.500 2.500 0 5" /><path d="M14 4.500q3 4.500 0 9M16.500 2.500q4 6.500 0 13" stroke="#888" /></svg>
        </Tray>
        <Lang>ENG</Lang>
        <Clock>10:26 am<br />6/8/2021</Clock>
        <Notice>
          <svg width="32" height="32" viewBox="0 0 32 32"><path d="M1 1h20v15H10v5l-5-5H1z" fill="#fff" /><path d="M5 5.500h13M5 9h13M5 12.500h9" stroke="#333" /><circle cx="21.500" cy="22" r="9.200" fill="#333238" stroke="#77777c" /><text x="21.500" y="27" textAnchor="middle" fontFamily="Liberation Sans" fontWeight="700" fontSize="13.500" fill="#fff">8</text></svg>
        </Notice>
        <PeekLine />
      </Taskbar>
    </Screen>
  );
}
